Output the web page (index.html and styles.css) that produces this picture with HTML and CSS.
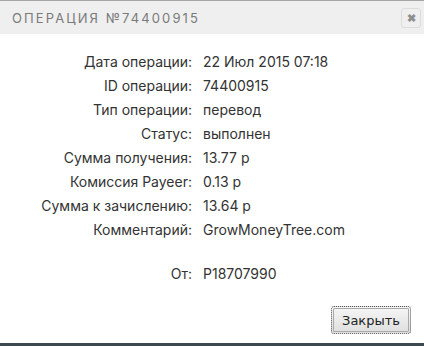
FILE: index.html
```html
<!DOCTYPE html>
<html>
  <head>
    <title>Операция №74400915</title>
    <meta charset="utf-8" />
    <link rel="stylesheet" href="styles.css">
  </head>
  <body>
    <div class="dialog">
      <div class="titlebar">
        <span class="title">Операция №74400915</span>
        <a class="close" href="">&#x2716;</a>
      </div>
      <div class="details">
        <span class="label">Дата операции:</span><span>22 Июл 2015 07:18</span>
        <span class="label">ID операции:</span><span>74400915</span>
        <span class="label">Тип операции:</span><span>перевод</span>
        <span class="label">Статус:</span><span>выполнен</span>
        <span class="label">Сумма получения:</span><span>13.77 р</span>
        <span class="label">Комиссия Payeer:</span><span>0.13 р</span>
        <span class="label">Сумма к зачислению:</span><span>13.64 р</span>
        <span class="label">Комментарий:</span><span>GrowMoneyTree.com</span>
        <span class="label from">От:</span><span class="from">P18707990</span>
      </div>
      <div class="buttons">
        <button>Закрыть</button>
      </div>
    </div>
    <div class="bottombar"></div>
  </body>
</html>
```
FILE: styles.css
```css
body {
  margin: 0;
  background: white;
  font: 14px/24px Inter, "Open Sans", sans-serif;
  color: #333;
}

.dialog {
  border-top: 1px solid #a6a6a6;
  height: 342px;
  display: flex;
  flex-direction: column;
}

.titlebar {
  height: 33px;
  background: #efefef;
  display: flex;
  align-items: center;
  justify-content: space-between;
  padding: 0 3px 0 12px;
}

.title {
  text-transform: uppercase;
  letter-spacing: 2.1px;
  color: #7a7a7a;
  font-size: 13px;
}

.close {
  width: 18px;
  height: 18px;
  border: 1px solid #dcdcdc;
  border-radius: 3px;
  color: #8e8e8e;
  font-size: 11px;
  font-weight: bold;
  line-height: 18px;
  text-align: center;
  text-decoration: none;
}

.details {
  display: grid;
  grid-template-columns: 192px 1fr;
  column-gap: 11px;
  padding-top: 16px;
}

.label {
  text-align: right;
}

.from {
  margin-top: 20px;
}

.buttons {
  margin-top: auto;
  display: flex;
  justify-content: flex-end;
  padding: 0 13px 9px 0;
}

button {
  width: 80px;
  height: 28px;
  font: 13px "DejaVu Sans", sans-serif;
  color: #222;
  border: 1px dotted #555;
  border-radius: 3px;
  background: linear-gradient(#f6f6f6, #dedede);
  outline: 1px solid #aaa;
  outline-offset: -3px;
}

.bottombar {
  height: 3px;
  background: #3c4a50;
}
```
